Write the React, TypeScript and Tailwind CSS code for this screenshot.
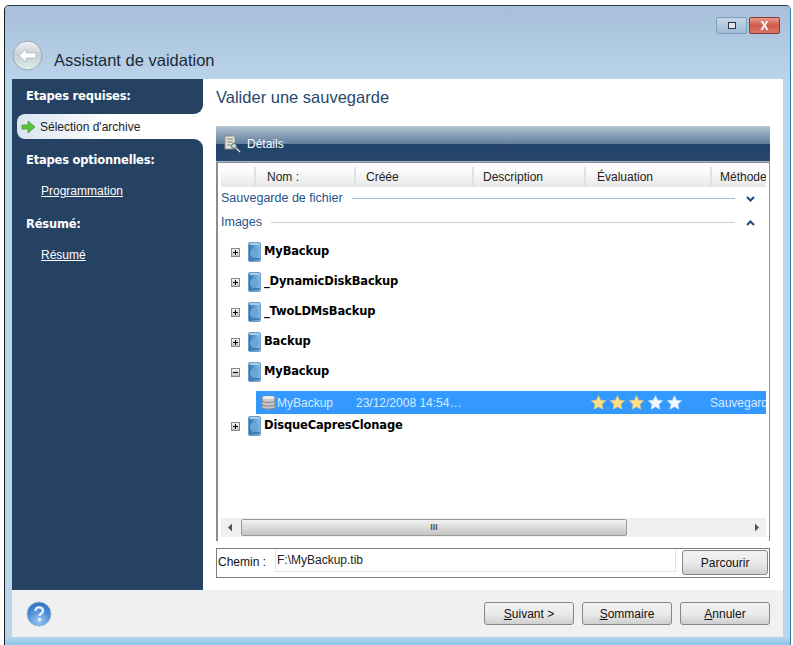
import React from "react";

const sans = "font-['Liberation_Sans',sans-serif]";
const bold = "font-['DejaVu_Sans',sans-serif] font-bold";

function Disk() {
  return (
    <svg width="13" height="20" viewBox="0 0 13 20" className="shrink-0 block">
      <defs>
        <linearGradient id="dk" x1="0" x2="1" y1="0" y2="0">
          <stop offset="0" stopColor="#2f6fa8" />
          <stop offset="0.5" stopColor="#5d9ed2" />
          <stop offset="1" stopColor="#8fbfe6" />
        </linearGradient>
      </defs>
      <rect x="0.5" y="0.5" width="12" height="19" rx="1.5" fill="url(#dk)" stroke="#6f9cc4" />
      <rect x="1.5" y="1" width="10" height="2" fill="#a8cdea" />
      <circle cx="6.5" cy="11" r="4.5" fill="#6aa6d8" />
      <rect x="1.5" y="16" width="10" height="2" fill="#3f7fb6" />
    </svg>
  );
}

function Expander({ open }: { open?: boolean }) {
  return (
    <span className="relative w-[9px] h-[9px] shrink-0 border border-[#8a8a8a] bg-gradient-to-b from-[#f4f4f4] to-[#c4c4c4]">
      <span className="absolute left-[1px] top-[3px] w-[5px] h-[1px] bg-black" />
      {!open && <span className="absolute left-[3px] top-[1px] w-[1px] h-[5px] bg-black" />}
    </span>
  );
}

function TreeRow({ name, open, className }: { name: string; open?: boolean; className: string }) {
  return (
    <div className={`flex items-center pl-[10px] ${className}`}>
      <Expander open={open} />
      <span className="ml-[8px]">
        <Disk />
      </span>
      <span className={`ml-[3px] text-[11.5px] text-black tracking-[-0.15px] ${bold}`}>{name}</span>
    </div>
  );
}

function Star({ gold }: { gold?: boolean }) {
  return (
    <svg width="15" height="15" viewBox="0 0 24 24" className="shrink-0">
      <path
        d="M12 1l3.4 7.4 8 .9-6 5.4 1.7 7.9-7.1-4-7.1 4 1.7-7.9-6-5.4 8-.9z"
        fill={gold ? "#ffdf80" : "#f4f8ff"}
        stroke={gold ? "#e8c98a" : "#cfe2fa"}
        strokeWidth="1"
      />
    </svg>
  );
}

function Chevron({ up }: { up?: boolean }) {
  return (
    <svg width="9" height="6" viewBox="0 0 9 6" className="shrink-0">
      <path d={up ? "M1 5l3.5-3.5L8 5" : "M1 1l3.5 3.5L8 1"} fill="none" stroke="#1f4a7c" strokeWidth="2" />
    </svg>
  );
}

function Btn({ children, className }: { children: React.ReactNode; className: string }) {
  return (
    <button
      className={`flex items-center justify-center rounded-[3px] border border-[#7d8a8a] bg-gradient-to-b from-[#f2f2f2] via-[#ebebeb] to-[#cfcfcf] text-[12px] text-[#111] ${sans} ${className}`}
    >
      {children}
    </button>
  );
}

function Col({ w, pl, children }: { w: string; pl: string; children?: React.ReactNode }) {
  return (
    <div className={`flex items-center h-full shrink-0 border-r-2 border-[#e2e2e2] overflow-hidden whitespace-nowrap ${pl} ${w}`}>
      {children}
    </div>
  );
}

export default function App() {
  return (
    <div className={`w-[793px] h-[645px] bg-white pt-[5px] pl-[4px] pr-[2px] ${sans}`}>
      <div className="h-[640px] flex flex-col border-l border-t border-r border-l-[#1a1a1a] border-t-[#2a3a44] border-r-[#2f7f96] rounded-tl-[5px] rounded-tr-[5px] bg-[#bad4eb]">
        {/* title bar */}
        <div className="h-[73px] shrink-0 relative flex items-end pl-[7px] pb-[8px] rounded-t-[4px] bg-gradient-to-b from-[#a7bfda] to-[#b9d3ea]">
          <svg width="31" height="31" viewBox="0 0 31 31" className="shrink-0">
            <defs>
              <linearGradient id="bk" x1="0" x2="0" y1="0" y2="1">
                <stop offset="0" stopColor="#f0f2f3" />
                <stop offset="0.5" stopColor="#c6ced3" />
                <stop offset="1" stopColor="#dff0ea" />
              </linearGradient>
            </defs>
            <circle cx="15.5" cy="15.5" r="14.5" fill="url(#bk)" stroke="#98a8b2" />
            <path d="M7 15.5l7-6.5v4h10v5H14v4z" fill="#fff" stroke="#a9b6bc" strokeWidth="0.7" />
          </svg>
          <span className="ml-[11px] text-[16.5px] leading-[22px] text-[#1c2a36] whitespace-nowrap">Assistant de vaidation</span>
          <div className="absolute right-[10px] top-[11px] flex gap-[2px]">
            <div className="w-[31px] h-[17px] rounded-[2px] border border-[#7f9fb8] bg-gradient-to-b from-[#c5d7e8] to-[#9dbcd6] flex items-center justify-center">
              <span className="w-[8px] h-[7px] border border-[#333] bg-[#dde6ee]" />
            </div>
            <div className="w-[31px] h-[17px] rounded-[2px] border border-[#8a3a30] bg-gradient-to-b from-[#e79a8c] via-[#cf5a48] to-[#d8766a] flex items-center justify-center text-white font-bold text-[12px] leading-none">
              X
            </div>
          </div>
        </div>

        {/* main */}
        <div className="flex h-[511px] shrink-0 mx-[7px]">
          {/* sidebar */}
          <div className="w-[191px] shrink-0 flex flex-col bg-white">
            <div className="h-[35px] bg-[#254263] rounded-br-[9px] pl-[14px] pt-[9px] text-[11.5px] leading-[16px] text-white tracking-[-0.2px]">
              <span className={bold}>Etapes requises:</span>
            </div>
            <div className="h-[25px] bg-[#254263]">
              <div className="h-full ml-[5px] rounded-l-[8px] bg-gradient-to-r from-[#d9e4ee] via-white to-white flex items-center pl-[4px]">
                <svg width="15" height="14" viewBox="0 0 15 14" className="shrink-0">
                  <path d="M1 5h6V1l7 6-7 6V9H1z" fill="#5cc23a" stroke="#3f8f3a" strokeWidth="0.7" />
                </svg>
                <span className="ml-[4px] text-[12px] text-[#222] whitespace-nowrap">Sélection d'archive</span>
              </div>
            </div>
            <div className="flex-1 bg-[#254263] rounded-tr-[9px] text-white flex flex-col">
              <div className={`ml-[14px] mt-[13px] text-[11.5px] leading-[16px] tracking-[-0.2px] ${bold}`}>Etapes optionnelles:</div>
              <div className="ml-[29px] mt-[15px] text-[12px] leading-[16px] underline">Programmation</div>
              <div className={`ml-[14px] mt-[17px] text-[11.5px] leading-[16px] tracking-[-0.2px] ${bold}`}>Résumé:</div>
              <div className="ml-[29px] mt-[15px] text-[12px] leading-[16px] underline">Résumé</div>
            </div>
          </div>

          {/* content */}
          <div className="flex-1 min-w-0 bg-white px-[13px] flex flex-col">
            <div className="pt-[7px] h-[47px] text-[16.5px] leading-[22px] text-[#27496d] whitespace-nowrap shrink-0">Valider une sauvegarde</div>

            {/* header band */}
            <div className="h-[36px] shrink-0 flex flex-col border-t border-[#b8c6d2] relative">
              <div className="h-[17px] bg-gradient-to-b from-[#aebfce] to-[#5f7f9d]" />
              <div className="flex-1 bg-gradient-to-b from-[#214269] to-[#28486e] border-b border-[#9fb4c8]" />
              <div className="absolute inset-0 flex items-center pl-[8px] pb-[1px]">
                <svg width="17" height="18" viewBox="0 0 17 18" className="shrink-0">
                  <rect x="1" y="1" width="10" height="13" fill="#e8e4da" stroke="#8c8a80" />
                  <path d="M3 4h6M3 7h6M3 10h4" stroke="#6f7c88" />
                  <circle cx="10" cy="11" r="2.5" fill="#cfe0ee" stroke="#54646f" />
                  <path d="M12 13l4 4" stroke="#d8dce0" strokeWidth="1.5" />
                </svg>
                <span className="ml-[6px] text-[12px] text-white">Détails</span>
              </div>
            </div>

            {/* list */}
            <div className="h-[379px] shrink-0 border-l-2 border-r border-[#8c8c8c] pl-[3px] pr-[3px] pt-[4px] flex flex-col border-t border-t-[#8c8c8c]">
              <div className="h-[20px] shrink-0 flex items-center bg-gradient-to-b from-white via-[#f3f3f3] to-[#e8e8e8] text-[12px] text-[#222]">
                <Col w="w-[35px]" pl="pl-0" />
                <Col w="w-[100px]" pl="pl-[11px]">Nom :</Col>
                <Col w="w-[118px]" pl="pl-[10px]">Créée</Col>
                <Col w="w-[112px]" pl="pl-[9px]">Description</Col>
                <Col w="w-[126px]" pl="pl-[11px]">Évaluation</Col>
                <div className="flex-1 min-w-0 h-full flex items-center pl-[8px] overflow-hidden whitespace-nowrap">Méthode</div>
              </div>

              <div className="h-[23px] shrink-0 flex items-center text-[12.5px] text-[#27528a] pr-[11px]">
                <span className="whitespace-nowrap">Sauvegarde de fichier</span>
                <span className="flex-1 h-[1px] bg-[#a8bcd8] ml-[9px] mr-[11px]" />
                <Chevron />
              </div>
              <div className="h-[25px] shrink-0 flex items-center text-[12.5px] text-[#27528a] pr-[11px]">
                <span className="whitespace-nowrap">Images</span>
                <span className="flex-1 h-[1px] bg-[#c5d0de] ml-[9px] mr-[11px]" />
                <Chevron up />
              </div>

              <TreeRow name="MyBackup" className="h-[30px] shrink-0 mt-[2px]" />
              <TreeRow name="_DynamicDiskBackup" className="h-[30px] shrink-0" />
              <TreeRow name="_TwoLDMsBackup" className="h-[30px] shrink-0" />
              <TreeRow name="Backup" className="h-[30px] shrink-0" />
              <TreeRow name="MyBackup" open className="h-[30px] shrink-0" />

              <div className="h-[23px] shrink-0 mt-[4px] ml-[35px] bg-[#3399ff] flex items-center text-[12px] text-[#d8ebff] overflow-hidden whitespace-nowrap">
                <svg width="15" height="17" viewBox="0 0 15 17" className="ml-[5px] shrink-0">
                  <path d="M1 3.5C1 1.5 14 1.5 14 3.5V13.5C14 15.5 1 15.5 1 13.5Z" fill="#c8c8c8" stroke="#8a8a8a" />
                  <path d="M1 7c2 2 11 2 13 0M1 10.5c2 2 11 2 13 0" fill="none" stroke="#7d7d7d" />
                  <ellipse cx="7.5" cy="3.5" rx="6" ry="1.6" fill="#eeeeee" />
                </svg>
                <span className="ml-[1px] w-[79px] shrink-0">MyBackup</span>
                <span className="w-[235px] shrink-0">23/12/2008 14:54…</span>
                <span className="flex gap-[4px] w-[119px] shrink-0">
                  <Star gold />
                  <Star gold />
                  <Star gold />
                  <Star />
                  <Star />
                </span>
                <span>Sauvegarde</span>
              </div>

              <TreeRow name="DisqueCapresClonage" className="h-[24px] shrink-0" />

              <div className="flex-1" />

              {/* scrollbar */}
              <div className="h-[19px] shrink-0 mb-[4px] bg-[#f0f0f0] flex items-center">
                <svg width="20" height="9" viewBox="0 0 20 9" className="shrink-0">
                  <path d="M11 0.5v8L7 4.5z" fill="#555" />
                </svg>
                <div className="w-[386px] h-[17px] shrink-0 rounded-[2px] border border-[#9a9a9a] bg-gradient-to-b from-[#f2f2f2] to-[#c4c4c4] flex items-center justify-center text-[#555] text-[9px] font-bold">
                  III
                </div>
                <div className="flex-1" />
                <svg width="15" height="9" viewBox="0 0 15 9" className="shrink-0">
                  <path d="M4 0.5v8L8 4.5z" fill="#555" />
                </svg>
              </div>
            </div>

            {/* path */}
            <div className="mt-[7px] h-[30px] shrink-0 flex border border-[#7a7a7a] pl-[1px] pr-[1px] pb-[2px]">
              <span className="w-[57px] shrink-0 text-[12px] text-[#111] flex items-center">Chemin :</span>
              <div className="w-[402px] h-[23px] border-l border-b border-r border-[#e4e4e4] flex items-center pl-[1px] text-[12px] text-[#222]">
                F:\MyBackup.tib
              </div>
              <Btn className="ml-[6px] w-[86px] h-[25px] mt-[1px]">Parcourir</Btn>
            </div>
          </div>
        </div>

        {/* footer */}
        <div className="h-[47px] shrink-0 mx-[7px] bg-[#f0f0f0] flex items-center pl-[14px] pr-[13px]">
          <svg width="26" height="26" viewBox="0 0 26 26" className="shrink-0">
            <defs>
              <radialGradient id="hp" cx="0.5" cy="0.8" r="0.8">
                <stop offset="0" stopColor="#9ccaf5" />
                <stop offset="0.6" stopColor="#4c8ed8" />
                <stop offset="1" stopColor="#2e69b8" />
              </radialGradient>
            </defs>
            <circle cx="13" cy="13" r="12" fill="url(#hp)" stroke="#9ab8dc" />
            <path d="M9.5 10c0-5 7.5-4.5 7.5-.5 0 3-3.5 3-3.5 5.5" fill="none" stroke="#e8f2fc" strokeWidth="2.4" />
            <rect x="12" y="17" width="3" height="3" fill="#e8f2fc" />
          </svg>
          <div className="flex-1" />
          <div className="flex gap-[8px]">
            <Btn className="w-[90px] h-[23px]"><span><span className="underline">S</span>uivant &gt;</span></Btn>
            <Btn className="w-[90px] h-[23px]"><span><span className="underline">S</span>ommaire</span></Btn>
            <Btn className="w-[90px] h-[23px]"><span><span className="underline">A</span>nnuler</span></Btn>
          </div>
        </div>
        <div className="flex-1 bg-gradient-to-b from-[#b4d6ee] to-[#8cc4e4]" />
      </div>
    </div>
  );
}
